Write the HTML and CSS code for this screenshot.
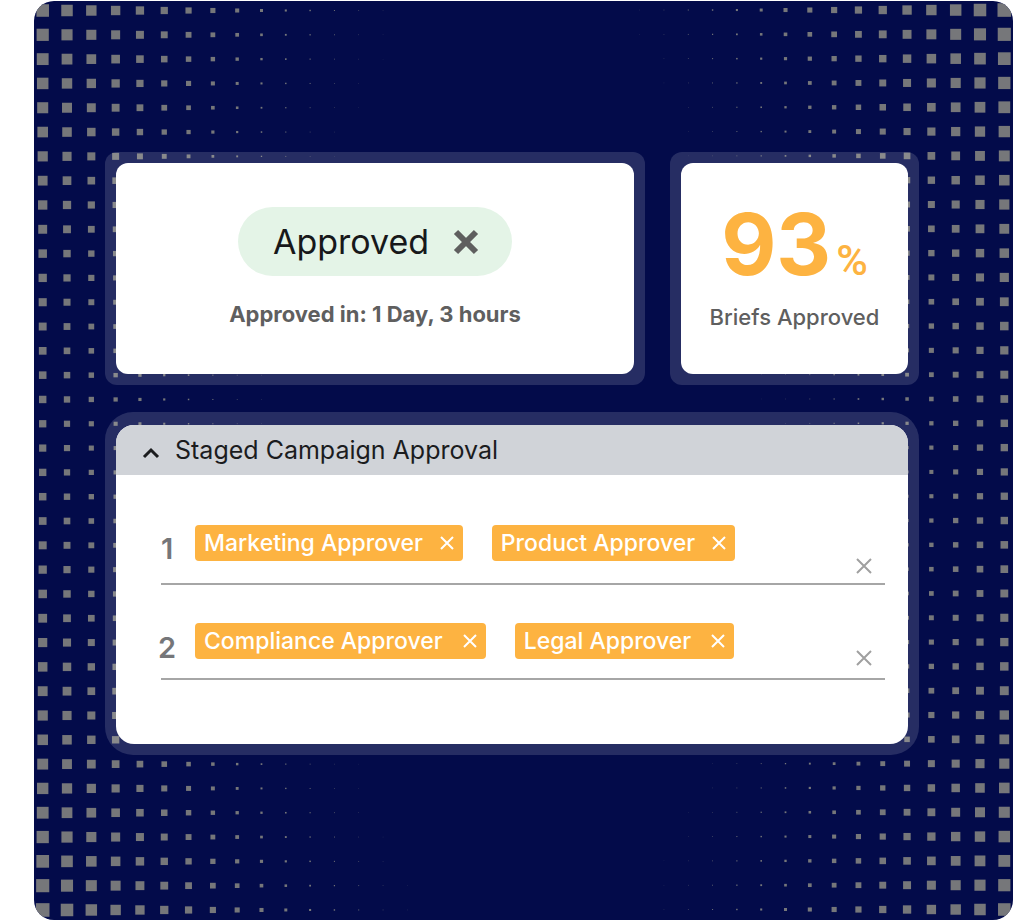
FILE: index.html
```html
<!DOCTYPE html>
<html lang="en">
<head>
<meta charset="utf-8">
<meta name="viewport" content="width=device-width, initial-scale=1">
<title>Staged Campaign Approval</title>
<link rel="stylesheet" href="styles.css">
</head>
<body>
<main class="panel">
  <svg class="dots dots-left" width="400" height="918" aria-hidden="true"></svg>
  <svg class="dots dots-right" width="400" height="918" aria-hidden="true"></svg>

  <div class="board">
    <section class="frame">
      <div class="card">
        <div class="status">
          <span>Approved</span>
          <button class="icon-button status-clear" type="button" aria-label="Clear status">
            <svg width="26" height="26" viewBox="0 0 26 26"><path d="M3 3L23 23M23 3L3 23" stroke="currentColor" stroke-width="6"/></svg>
          </button>
        </div>
        <p class="caption caption-strong">Approved in: 1 Day, 3 hours</p>
      </div>
    </section>

    <section class="frame">
      <div class="card">
        <p class="metric">93<span class="metric-unit">%</span></p>
        <p class="caption">Briefs Approved</p>
      </div>
    </section>

    <section class="frame frame-wide">
      <div class="stages">
        <button class="stages-header" type="button" aria-expanded="true">
          <svg class="chevron" width="18" height="12" viewBox="0 0 18 12" aria-hidden="true"><path d="M2 10L9 3L16 10" fill="none" stroke="currentColor" stroke-width="3"/></svg>
          <span>Staged Campaign Approval</span>
        </button>
        <ol class="stage-list">
          <li class="stage">
            <span class="stage-number">1</span>
            <div class="tags">
              <span class="tag">Marketing Approver<button class="icon-button" type="button" aria-label="Remove Marketing Approver"><svg width="14" height="14" viewBox="0 0 14 14"><path d="M1 1L13 13M13 1L1 13" stroke="currentColor" stroke-width="2"/></svg></button></span>
              <span class="tag">Product Approver<button class="icon-button" type="button" aria-label="Remove Product Approver"><svg width="14" height="14" viewBox="0 0 14 14"><path d="M1 1L13 13M13 1L1 13" stroke="currentColor" stroke-width="2"/></svg></button></span>
            </div>
            <button class="icon-button stage-clear" type="button" aria-label="Clear stage 1"><svg width="16" height="16" viewBox="0 0 16 16"><path d="M1 1L15 15M15 1L1 15" stroke="currentColor" stroke-width="2"/></svg></button>
          </li>
          <li class="stage stage-last">
            <span class="stage-number">2</span>
            <div class="tags">
              <span class="tag">Compliance Approver<button class="icon-button" type="button" aria-label="Remove Compliance Approver"><svg width="14" height="14" viewBox="0 0 14 14"><path d="M1 1L13 13M13 1L1 13" stroke="currentColor" stroke-width="2"/></svg></button></span>
              <span class="tag">Legal Approver<button class="icon-button" type="button" aria-label="Remove Legal Approver"><svg width="14" height="14" viewBox="0 0 14 14"><path d="M1 1L13 13M13 1L1 13" stroke="currentColor" stroke-width="2"/></svg></button></span>
            </div>
            <button class="icon-button stage-clear" type="button" aria-label="Clear stage 2"><svg width="16" height="16" viewBox="0 0 16 16"><path d="M1 1L15 15M15 1L1 15" stroke="currentColor" stroke-width="2"/></svg></button>
          </li>
        </ol>
      </div>
    </section>
  </div>
</main>
<script src="dots.js"></script>
</body>
</html>
```

FILE: styles.css
```css
* {
  box-sizing: border-box;
}

body {
  margin: 0;
  padding: 1px 11px 0 34px;
  background: #fff;
  font-family: Inter, "Liberation Sans", sans-serif;
}

p,
ol {
  margin: 0;
  padding: 0;
}

.panel {
  position: relative;
  min-height: calc(100vh - 1px);
  padding: 151px 94px 96px 71px;
  border-radius: 20px;
  overflow: hidden;
  background: #030b4a;
}

.dots {
  position: absolute;
  top: 0;
  fill: #76777a;
}

.dots-left {
  left: 0;
}

.dots-right {
  right: 0;
  transform: rotate(180deg);
}

.board {
  position: relative;
  display: grid;
  grid-template-columns: 540fr 249fr;
  gap: 27px 25px;
}

.frame {
  display: grid;
  padding: 11px;
  border-radius: 12px;
  background: rgba(255, 255, 255, 0.14);
}

.frame-wide {
  grid-column: 1 / -1;
  padding: 13px 11px 11px;
  border-radius: 28px;
}

.card {
  display: flex;
  flex-direction: column;
  align-items: center;
  min-height: 211px;
  border-radius: 12px;
  background: #fff;
}

.icon-button {
  display: flex;
  padding: 0;
  border: 0;
  background: none;
  color: inherit;
  cursor: pointer;
}

.status {
  display: flex;
  align-items: center;
  gap: 24px;
  height: 69px;
  margin-top: 44px;
  padding: 0 33px 0 35px;
  border-radius: 35px;
  background: #e4f4e7;
  color: #17181a;
  font-size: 34px;
}

.status-clear {
  color: #5f5f5f;
}

.caption {
  color: #5f5f5f;
  font-size: 22px;
  font-weight: 500;
  line-height: 28px;
}

.caption-strong {
  margin-top: 24px;
  font-weight: 700;
}

.metric {
  display: flex;
  align-items: baseline;
  gap: 5px;
  margin: 36px 0 12px;
  color: #fdb341;
  font-size: 85px;
  font-weight: 700;
  line-height: 92px;
}

.metric-unit {
  font-family: Roboto, sans-serif;
  font-size: 43px;
  font-weight: 500;
  line-height: 44px;
}

.stages {
  min-height: 319px;
  border-radius: 18px;
  overflow: hidden;
  background: #fff;
}

.stages-header {
  display: flex;
  align-items: center;
  gap: 15px;
  width: 100%;
  height: 50px;
  padding: 0 26px;
  border: 0;
  background: #d0d3d8;
  color: #1b1c1e;
  font: 400 25px Inter, sans-serif;
  text-align: left;
}

.chevron {
  margin-top: 5px;
}

.stage-list {
  display: grid;
  gap: 38px;
  padding: 50px 23px 0 45px;
  list-style: none;
}

.stage {
  display: flex;
  align-items: flex-end;
  padding: 0 13px 9px 0;
  border-bottom: 2px solid #a6a6a6;
}

.stage-number {
  display: flex;
  justify-content: center;
  width: 12px;
  margin-right: 22px;
  padding-bottom: 7px;
  color: #757679;
  font-size: 29px;
  font-weight: 600;
  line-height: 36px;
}

.tags {
  display: flex;
  flex: 1;
  flex-wrap: wrap;
  gap: 29px;
  padding-bottom: 13px;
}

.tag {
  display: flex;
  align-items: center;
  gap: 17px;
  height: 36px;
  padding: 0 9px;
  border-radius: 4px;
  background: #fdb341;
  color: #fff;
  font-size: 23px;
  font-weight: 500;
}

.stage-clear {
  color: #a0a0a0;
}

.stage-last {
  padding-bottom: 12px;
}

.stage-last .stage-number {
  padding-bottom: 0;
}

.stage-last .tags {
  padding-bottom: 7px;
}

.stage-last .tag {
  gap: 20px;
}
```

FILE: dots.js
```js
const NS = "http://www.w3.org/2000/svg";
const PITCH = 24.31;

// [y, size] of the squares in the outermost column
const edge = [[0, 12.7], [82, 11.5], [155, 10.2], [252, 8.5], [350, 7.7], [440, 7.2], [500, 7.5], [617, 8.8], [762, 10.9], [920, 13.8]];

function edgeSize(y) {
  const k = Math.max(1, edge.findIndex(([stop]) => stop >= y));
  const [y0, s0] = edge[k - 1];
  const [y1, s1] = edge[k];
  return s0 + (s1 - s0) * (y - y0) / (y1 - y0);
}

document.querySelectorAll(".dots").forEach((svg) => {
  for (let row = 0; row < 38; row++) {
    for (let col = 0; col < 16; col++) {
      const x = 8.7 + col * PITCH;
      const y = 9.5 + row * PITCH;
      const v = edgeSize(y) - 1.06 * col;
      const size = v > 3 ? v : 3 * Math.exp((v - 3) / 2.8);
      if (size < 0.35) continue;
      const dot = document.createElementNS(NS, "rect");
      dot.setAttribute("x", x - size / 2);
      dot.setAttribute("y", y - size / 2);
      dot.setAttribute("width", size);
      dot.setAttribute("height", size);
      svg.append(dot);
    }
  }
});
```
